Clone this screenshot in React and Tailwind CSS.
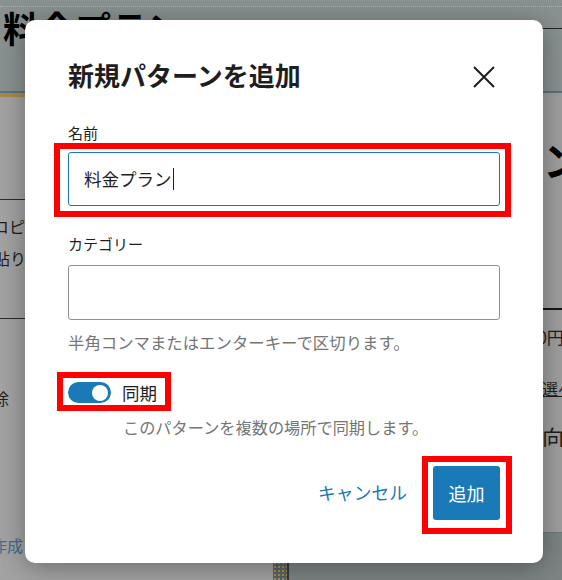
import React from 'react'

const font = "font-['Noto_Sans_CJK_JP','Noto_Sans',sans-serif]"

const CloseIcon = () => (
  <svg width="24" height="24" viewBox="0 0 24 24" className="mr-[4px] mt-[3px]">
    <path d="M2 2L22 22M22 2L2 22" stroke="#1e1e1e" strokeWidth="2" fill="none" />
  </svg>
)

// red annotation frame laid over the highlighted control
const Mark = ({ className }) => (
  <div className={`pointer-events-none absolute border-[6px] border-[#ff0000] ${className}`} />
)

const Backdrop = () => (
  <div className="flex h-full flex-col">
    <div className="h-[91px] bg-[#899191]">
      <div className="mt-[6px] border-t border-dotted border-[#a9afaf]" />
      <div className="flex items-start">
        <div className="ml-[3px] mt-[2px] text-[36px] font-bold leading-none text-black">料金プラン</div>
        <div className="ml-[20px] mt-[21px] flex-1 border-t border-[#1f2424]" />
      </div>
    </div>
    <div className="h-[2px] bg-[#5b7381]" />
    <div className="flex flex-1">
      <div className="flex w-[273px] flex-col bg-[#a3a3a3] text-[16px] leading-none text-[#1e1e1e]">
        <div className="h-[4px] bg-[#a68b4c]" />
        <div className="mt-[102px] border-t border-[#2a2a2a]" />
        <div className="-ml-[7px] mt-[18px] whitespace-nowrap">コピー</div>
        <div className="-ml-[6px] mt-[16px] whitespace-nowrap">貼り付け</div>
        <div className="mt-[52px] border-t border-[#2a2a2a]" />
        <div className="-ml-[23px] mt-[71px] whitespace-nowrap">削除</div>
        <div className="-ml-[9px] mt-[131px] whitespace-nowrap text-[#3b6d8f]">作成</div>
      </div>
      <div className="w-[14px] bg-[#56656e] bg-[radial-gradient(#b48f3c_1px,transparent_1.2px)] bg-[length:4px_4px]" />
      <div className="w-[2px] bg-[#2f3a40]" />
      <div className="flex flex-1 flex-col">
        <div className="flex-1 bg-[#9f9f9f]">
          <div className="ml-auto flex w-[40px] flex-col overflow-hidden whitespace-nowrap leading-none text-[#1e1e1e]">
            <div className="ml-[21px] mt-[46px] text-[40px] font-bold text-black">ン</div>
            <div className="mt-[129px] h-[2px] bg-[#151515]" />
            <div className="ml-[6px] mt-[18px] text-[17px]">10円</div>
            <div className="ml-[20px] mt-[35px] text-[16px] underline">選べる</div>
            <div className="ml-[20px] mt-[29px] text-[22px]">向け</div>
          </div>
        </div>
        <div className="h-[48px] border-t border-[#66777f] bg-[#7d8484]" />
      </div>
    </div>
  </div>
)

export default function App() {
  return (
    <div className={`relative h-[580px] w-[562px] overflow-hidden bg-[#a3a3a3] ${font}`}>
      <Backdrop />

      <div className="absolute left-[25px] top-[20px] flex h-[543px] w-[518px] flex-col rounded-[10px] bg-white px-[43px] pt-[42px] shadow-[0_4px_28px_rgba(0,0,0,0.35)]">
        <div className="flex h-[26px] items-center justify-between">
          <h1 className="text-[26px] font-bold leading-none text-[#1e1e1e]">新規パターンを追加</h1>
          <CloseIcon />
        </div>

        <label className="mt-[37px] text-[15px] leading-none text-[#1e1e1e]">名前</label>
        <div className="relative mt-[12px]">
          <div className="flex h-[54px] items-center rounded-[3px] border-[1.5px] border-[#1a7ab8] pl-[15px] text-[17.5px] leading-none text-[#1e1e1e]">
            料金プラン
            <span className="ml-[1px] h-[22px] w-[1.5px] bg-[#1e1e1e]" />
          </div>
          <Mark className="-left-[14px] -top-[9px] -right-[11px] -bottom-[11px]" />
        </div>

        <label className="mt-[30px] text-[15px] leading-none text-[#1e1e1e]">カテゴリー</label>
        <div className="mt-[14px] h-[55px] rounded-[3px] border border-[#8f8f8f]" />
        <p className="mt-[14px] whitespace-nowrap text-[16.4px] leading-none text-[#757575]">
          半角コンマまたはエンターキーで区切ります。
        </p>

        <div className="relative mt-[32px] flex w-fit items-center gap-[11px]">
          <div className="flex h-[21px] w-[43px] items-center justify-end rounded-full bg-[#1a7ab8] pr-[3px]">
            <div className="h-[16px] w-[16px] rounded-full bg-white" />
          </div>
          <span className="text-[17.5px] leading-none text-[#1e1e1e]">同期</span>
          <Mark className="-left-[11px] -top-[10px] -right-[14px] -bottom-[8px]" />
        </div>
        <p className="ml-[55px] mt-[16px] whitespace-nowrap text-[16.2px] leading-none text-[#757575]">
          このパターンを複数の場所で同期します。
        </p>

        <div className="mt-[30px] flex items-center justify-end gap-[26px]">
          <button className="text-[17.8px] leading-none text-[#1a7ab8]">キャンセル</button>
          <div className="relative">
            <button className="flex h-[54px] w-[67px] items-center justify-center rounded-[3px] bg-[#1a7ab8] text-[18px] leading-none text-white">
              追加
            </button>
            <Mark className="-left-[11px] -top-[10px] -right-[12px] -bottom-[14px]" />
          </div>
        </div>
      </div>
    </div>
  )
}
